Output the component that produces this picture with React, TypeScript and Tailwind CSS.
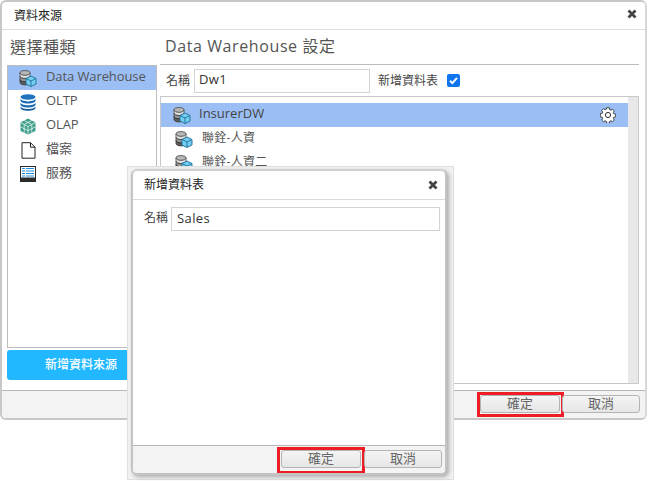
const font = { fontFamily: '"Open Sans","Noto Sans CJK TC",sans-serif' };

function DwIcon() {
  return (
    <svg width="18" height="17" viewBox="0 0 18 17" className="shrink-0">
      <ellipse cx="6" cy="3" rx="5" ry="2.400" fill="#b8b8b8" stroke="#444" strokeWidth="0.8" />
      <path d="M1 3v3c0 1.300 2.200 2.400 5 2.400s5-1.100 5-2.400V3c0 1.300-2.200 2.400-5 2.400S1 4.300 1 3z" fill="#e4e4e4" stroke="#555" strokeWidth="0.8" />
      <path d="M1 6.300v3c0 1.300 2.200 2.400 5 2.400s5-1.100 5-2.400v-3c0 1.300-2.200 2.400-5 2.400S1 7.600 1 6.300z" fill="#999" stroke="#444" strokeWidth="0.8" />
      <path d="M1 9.500v3c0 1.300 2.200 2.400 5 2.400s5-1.100 5-2.400v-3c0 1.300-2.200 2.400-5 2.400S1 10.800 1 9.500z" fill="#5c5c5c" stroke="#333" strokeWidth="0.8" />
      <path d="M12 6l5 2.500v5.500l-5 2.500-5-2.500V8.500z" fill="#74cdf2" stroke="#1c6f99" strokeWidth="0.9" />
      <path d="M7 8.500l5 2.500 5-2.500M12 11v5.500" fill="none" stroke="#1c6f99" strokeWidth="0.9" />
    </svg>
  );
}

function OltpIcon() {
  return (
    <svg width="16" height="17" viewBox="0 0 16 17" className="shrink-0">
      <ellipse cx="8" cy="3" rx="7.500" ry="2.800" fill="#1e73be" />
      <path d="M.5 4.600c0 1.500 3.300 2.800 7.500 2.800s7.500-1.300 7.500-2.800v2.200c0 1.500-3.300 2.800-7.500 2.800S.5 8.300.5 6.800z" fill="#1a6cb5" />
      <path d="M.5 8.500c0 1.500 3.300 2.800 7.500 2.800s7.500-1.300 7.500-2.800v2.200c0 1.500-3.300 2.800-7.500 2.800S.5 12.200.5 10.700z" fill="#1a6cb5" />
      <path d="M.5 12.300c0 1.500 3.300 2.800 7.500 2.800s7.500-1.300 7.500-2.800v1.700c0 1.500-3.300 2.800-7.500 2.800S.5 15.500.5 14z" fill="#175fa0" />
    </svg>
  );
}

function OlapIcon() {
  return (
    <svg width="16" height="17" viewBox="0 0 16 17" className="shrink-0">
      <path d="M8 .5l7.500 4v8.500L8 16.500.5 13V4.500z" fill="#3f9f8c" />
      <path d="M.5 4.500L8 8.500l7.500-4M8 8.500v8M4.200 2.500l7.500 4M11.800 2.500l-7.500 4M.5 8.800L8 12.700l7.500-3.900M4.200 6.500v8.300M11.800 6.500v8.300" fill="none" stroke="#d5ece6" strokeWidth="0.9" />
    </svg>
  );
}

function FileIcon() {
  return (
    <svg width="15" height="17" viewBox="0 0 15 17" className="shrink-0">
      <path d="M1 .7h8.500L14 5.200v11H1z" fill="#fff" stroke="#222" strokeWidth="1" />
      <path d="M9.500.7v4.500H14" fill="none" stroke="#222" strokeWidth="1" />
    </svg>
  );
}

function ServiceIcon() {
  return (
    <svg width="16" height="16" viewBox="0 0 16 16" className="shrink-0">
      <rect width="16" height="16" fill="#2a2a2a" />
      <rect x="1" y="1" width="14" height="10.500" fill="#fff" />
      <path d="M2 2.500h3M6 2.500h8M2 5h3M6 5h8M2 7.500h3M6 7.500h8M2 10h3M6 10h8" stroke="#1e8fe0" strokeWidth="1.200" />
    </svg>
  );
}

function Gear() {
  return (
    <svg width="16" height="16" viewBox="0 0 16 16" className="shrink-0">
      <path
        d="M6.700.8h2.600l.4 1.900 1.200.5 1.600-1 1.800 1.800-1 1.600.5 1.200 1.900.4v2.600l-1.900.4-.5 1.200 1 1.600-1.800 1.800-1.600-1-1.200.5-.4 1.900H6.700l-.4-1.900-1.200-.5-1.600 1-1.800-1.800 1-1.600-.5-1.200-1.900-.4V6.700l1.900-.4.5-1.200-1-1.600 1.800-1.800 1.600 1 1.200-.5z"
        fill="#fff"
        stroke="#333"
        strokeWidth="0.9"
      />
      <circle cx="8" cy="8" r="2.600" fill="#fff" stroke="#333" strokeWidth="1" />
    </svg>
  );
}

function CloseX() {
  return (
    <svg width="10" height="10" viewBox="0 0 10 10">
      <path d="M1.500 1.500l7 7M8.500 1.500l-7 7" stroke="#444" strokeWidth="2.800" />
    </svg>
  );
}

function FootButton({ label, frame, className }: { label: string; frame?: string; className: string }) {
  return (
    <div
      className={
        "relative h-[18px] flex items-center justify-center rounded-[3px] border border-[#b4b4b4] bg-gradient-to-b from-[#f4f4f4] to-[#e6e6e6] text-[13px] text-[#666] " +
        className
      }
    >
      {label}
      {frame && <div className={"absolute border-[3px] border-[#ee1c25] " + frame} />}
    </div>
  );
}

const menu = [
  { label: "Data Warehouse", icon: <DwIcon />, active: true },
  { label: "OLTP", icon: <OltpIcon /> },
  { label: "OLAP", icon: <OlapIcon /> },
  { label: "檔案", icon: <FileIcon /> },
  { label: "服務", icon: <ServiceIcon /> },
];

export default function App() {
  return (
    <div className="relative w-[648px] h-[481px] bg-white overflow-hidden text-[#333]" style={font}>
      <div className="h-[420px] w-[647px] flex flex-col rounded-[6px] border-2 border-[#c8c8c8] border-r-[#d8d8d8] bg-white overflow-hidden">
        <div className="h-[28px] shrink-0 flex items-center justify-between border-b border-[#dcdcdc] pl-[12px] pr-[8px] pb-[4px]">
          <span className="text-[12px] pt-[4px] text-[#222]">資料來源</span>
          <CloseX />
        </div>
        <div className="flex-1 flex min-h-0 pl-[5px] pr-[6px]">
          <div className="w-[150px] shrink-0 flex flex-col">
            <div className="h-[35px] shrink-0 pl-[3px] pb-[2px] flex items-center text-[16px] tracking-[0.5px] text-[#555]">選擇種類</div>
            <div className="h-[283px] border border-[#bdbdbd]">
              {menu.map((m) => (
                <div
                  key={m.label}
                  className={"h-[24px] flex items-center gap-[10px] pl-[12px] text-[13px] tracking-[-0.1px] text-[#555] " + (m.active ? "bg-[#9bbff4]" : "")}
                >
                  <span className="w-[16px] flex justify-center">{m.icon}</span>
                  <span className="pb-[2px]">{m.label}</span>
                </div>
              ))}
            </div>
            <div className="mt-[2px] h-[30px] rounded-[3px] bg-[#22b8ff] pl-[38px] flex items-center text-[12px] font-medium text-white">新增資料來源</div>
          </div>
          <div className="ml-[3px] flex-1 min-w-0 flex flex-col">
            <div className="h-[35px] shrink-0 border-b border-[#bdbdbd] pl-[5px] pb-[2px] flex items-center text-[16px] tracking-[0.6px] text-[#555]">Data Warehouse 設定</div>
            <div className="h-[31px] shrink-0 flex items-center pl-[6px]">
              <span className="text-[12px] text-[#444] w-[28px]">名稱</span>
              <div className="w-[176px] h-[24px] border border-[#d4d4d4] pl-[4px] pb-[1px] flex items-center text-[13px] tracking-[0.4px] text-[#333]">Dw1</div>
              <span className="ml-[8px] text-[12px] text-[#444]">新增資料表</span>
              <span className="ml-[9px] w-[13px] h-[13px] rounded-[2px] bg-[#0f76ee] flex items-center justify-center">
                <svg width="11" height="11" viewBox="0 0 11 11">
                  <path d="M2 5.700l2.400 2.400L9 2.800" fill="none" stroke="#fff" strokeWidth="2" />
                </svg>
              </span>
            </div>
            <div className="h-[288px] border border-[#c8c8c8] flex">
              <div className="flex-1 pt-[6px]">
                <div className="h-[24px] bg-[#9bbff4] flex items-center pl-[12px] pr-[12px] text-[13px] text-[#444]">
                  <DwIcon />
                  <span className="ml-[8px] flex-1 pb-[2px]">InsurerDW</span>
                  <Gear />
                </div>
                <div className="h-[24px] flex items-center pl-[14px] text-[12px] tracking-[0.3px] text-[#555]">
                  <DwIcon />
                  <span className="ml-[9px] pb-[2px]">聯銓-人資</span>
                </div>
                <div className="h-[24px] flex items-center pl-[14px] text-[12px] tracking-[0.3px] text-[#555]">
                  <DwIcon />
                  <span className="ml-[9px] pb-[2px]">聯銓-人資二</span>
                </div>
              </div>
              <div className="w-[10px] bg-[#e8e8e8]" />
            </div>
          </div>
        </div>
        <div className="h-[28px] shrink-0 border-t border-[#b8b8b8] bg-[#f3f3f3] flex justify-end pt-[4px] pr-[5px] gap-[2px]">
          <FootButton label="確定" frame="-left-[4px] -right-[5px] -top-[4px] -bottom-[5px]" className="w-[80px]" />
          <FootButton label="取消" className="w-[78px]" />
        </div>
      </div>

      <div className="absolute left-[127px] top-[166px] w-[327px] h-[314px] bg-[#f2f2f2] pl-[4px] pr-[7px] pt-[3px] shadow-[inset_0_0_0_1px_#e0e0e0]">
        <div className="w-full h-[306px] flex flex-col rounded-[6px] border-2 border-[#c4c4c4] border-t-[#d0d0d0] bg-white overflow-hidden shadow-[2px_2px_4px_#aaa]">
          <div className="h-[29px] shrink-0 flex items-center justify-between border-b border-[#dcdcdc] pl-[11px] pr-[7px]">
            <span className="text-[12px] text-[#222]">新增資料表</span>
            <CloseX />
          </div>
          <div className="flex-1 flex items-start pl-[11px] pr-[5px] pt-[7px]">
            <span className="w-[27px] h-[24px] pb-[2px] flex items-center text-[12px] text-[#444]">名稱</span>
            <div className="flex-1 h-[24px] border border-[#d4d4d4] pl-[5px] pb-[1px] flex items-center text-[13px] tracking-[0.4px] text-[#333]">Sales</div>
          </div>
          <div className="h-[28px] shrink-0 border-t border-[#b8b8b8] bg-[#f3f3f3] flex justify-end pt-[4px] pr-[3px] gap-[3px]">
            <FootButton label="確定" frame="-left-[5px] -right-[5px] -top-[4px] -bottom-[7px]" className="w-[80px]" />
            <FootButton label="取消" className="w-[78px]" />
          </div>
        </div>
      </div>
    </div>
  );
}
